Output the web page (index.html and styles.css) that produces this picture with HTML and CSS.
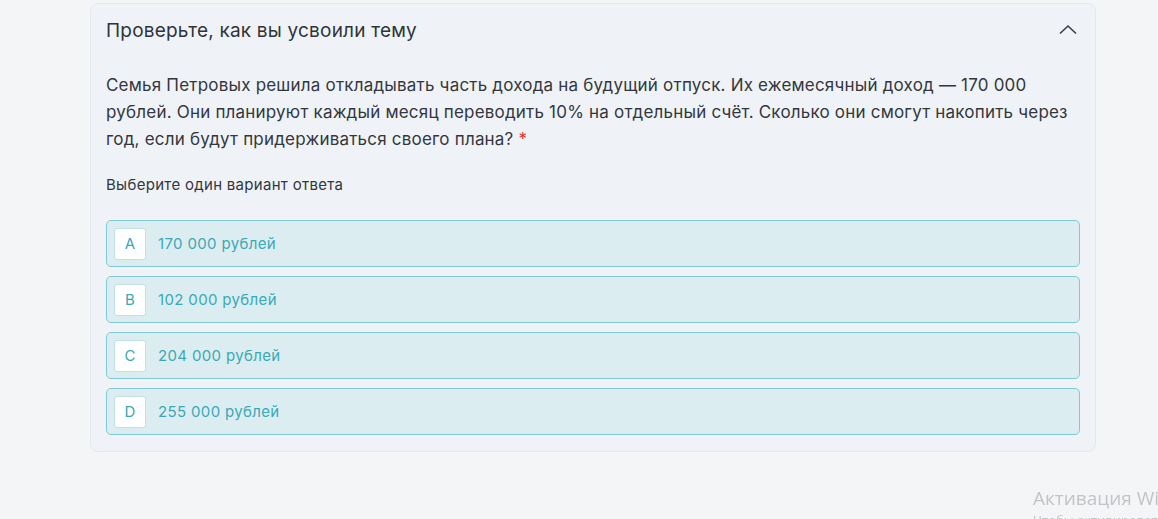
FILE: index.html
```html
<!DOCTYPE html>
<html lang="ru">
<head>
  <meta charset="UTF-8">
  <title>Проверьте, как вы усвоили тему</title>
  <link rel="stylesheet" href="styles.css">
</head>
<body>

  <!-- блок с тестом -->
  <div class="quiz">
    <div class="quiz-head">
      <span class="quiz-title">Проверьте, как вы усвоили тему</span>
      <svg class="chevron" width="20" height="20" viewBox="0 0 20 20">
        <path d="M2 13.5 L10 6 L18 13.5" fill="none" stroke="#3a3f45" stroke-width="1.6"/>
      </svg>
    </div>

    <div class="quiz-body">
      <p class="question">Семья Петровых решила откладывать часть дохода на будущий отпуск. Их ежемесячный доход — 170 000 рублей. Они планируют каждый месяц переводить 10% на отдельный счёт. Сколько они смогут накопить через год, если будут придерживаться своего плана? <span class="req">*</span></p>
      <p class="hint">Выберите один вариант ответа</p>

      <div class="options">
        <div class="option"><span class="letter">A</span><span class="answer">170 000 рублей</span></div>
        <div class="option"><span class="letter">B</span><span class="answer">102 000 рублей</span></div>
        <div class="option"><span class="letter">C</span><span class="answer">204 000 рублей</span></div>
        <div class="option"><span class="letter">D</span><span class="answer">255 000 рублей</span></div>
      </div>
    </div>
  </div>

  <!-- водяной знак -->
  <div class="watermark">
    <div class="wm-title">Активация Windows</div>
    <div class="wm-sub">Чтобы активировать Windows, перейдите</div>
  </div>

</body>
</html>
```

FILE: styles.css
```css
/* общий фон страницы */
body {
  margin: 0;
  background-color: #f4f5f7;
  font-family: Inter, "Noto Sans", sans-serif;
  color: #33373d;
  overflow: hidden;
}

/* карточка теста */
.quiz {
  width: 1006px;
  margin: 3px 0 0 90px;
  box-sizing: border-box;
  background-color: #eff3f8;
  border: 1px solid #e4e8ed;
  border-radius: 8px;
  padding: 0 15px 16px 15px;
}

.quiz-head {
  display: flex;
  align-items: center;
  justify-content: space-between;
  height: 52px;
}

.quiz-title {
  font-size: 19px;
  letter-spacing: 0.2px;
  color: #303439;
}

.chevron {
  margin-right: 2px;
}

.quiz-body {
  padding-top: 16px;
}

.question {
  margin: 0;
  font-size: 17px;
  line-height: 27px;
  letter-spacing: 0.2px;
}

.req {
  color: #e0322f;
}

.hint {
  margin: 22px 0 0;
  font-size: 15px;
  line-height: 20px;
  letter-spacing: 0.3px;
}

/* варианты ответа */
.options {
  display: flex;
  flex-direction: column;
  gap: 9px;
  margin-top: 25px;
}

.option {
  display: flex;
  align-items: center;
  gap: 12px;
  height: 47px;
  box-sizing: border-box;
  padding: 0 7px;
  background-color: #dcedf1;
  border: 1px solid #80cad4;
  border-radius: 5px;
}

.letter {
  width: 32px;
  height: 32px;
  box-sizing: border-box;
  display: flex;
  align-items: center;
  justify-content: center;
  background-color: #ffffff;
  border: 1px solid #bfe2e7;
  border-radius: 3px;
  font-size: 15px;
  color: #3aa9b6;
}

.answer {
  font-size: 15px;
  letter-spacing: 0.35px;
  color: #3aa9b6;
}

/* водяной знак активации */
.watermark {
  position: fixed;
  left: 1033px;
  top: 486px;
  color: #c2c4c7;
  white-space: nowrap;
  font-family: "Open Sans", sans-serif;
}

.wm-title {
  font-size: 19px;
  line-height: 24px;
}

.wm-sub {
  font-size: 13px;
  line-height: 20px;
}
```
